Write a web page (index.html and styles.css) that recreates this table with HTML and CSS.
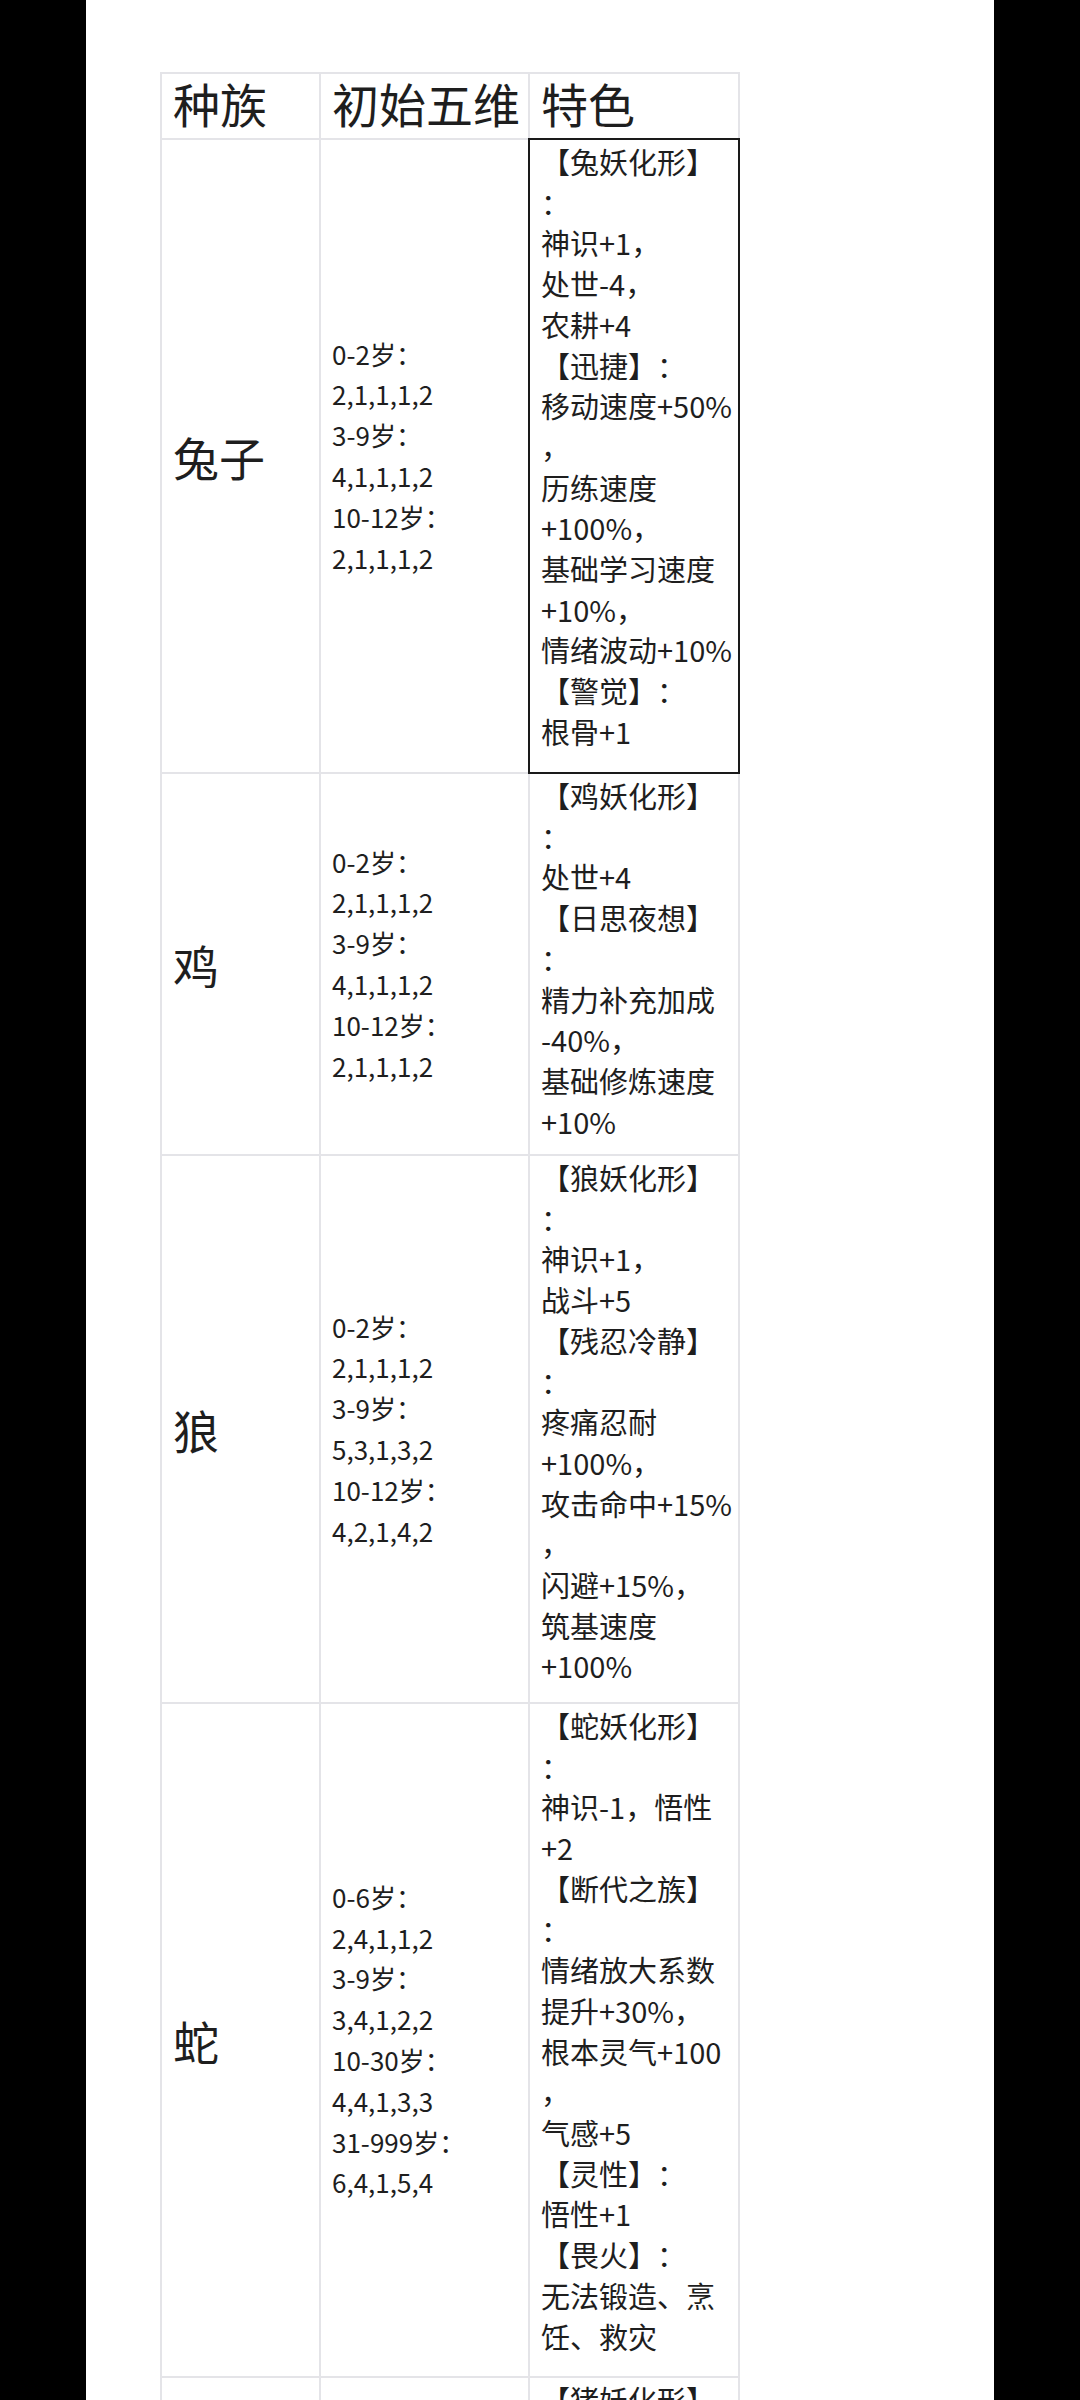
FILE: index.html
```html
<!DOCTYPE html>
<html lang="zh-CN">
<head>
    <meta charset="UTF-8">
    <meta name="viewport" content="width=device-width, initial-scale=1.0">
    <title>种族</title>
    <link rel="stylesheet" href="styles.css">
</head>
<body>
    <div class="page">
        <table class="sheet">
            <colgroup>
                <col class="c-race">
                <col class="c-stats">
                <col class="c-trait">
            </colgroup>
            <tr class="head">
                <th>种族</th>
                <th>初始五维</th>
                <th>特色</th>
            </tr>
            <tr class="r-rabbit">
                <td class="race">兔子</td>
                <td class="stats">0-2岁：<br>2,1,1,1,2<br>3-9岁：<br>4,1,1,1,2<br>10-12岁：<br>2,1,1,1,2</td>
                <td class="trait selected">【兔妖化形】<br>：<br>神识+1，<br>处世-4，<br>农耕+4<br>【迅捷】：<br>移动速度+50%<br>，<br>历练速度<br>+100%，<br>基础学习速度<br>+10%，<br>情绪波动+10%<br>【警觉】：<br>根骨+1</td>
            </tr>
            <tr class="r-chicken">
                <td class="race">鸡</td>
                <td class="stats">0-2岁：<br>2,1,1,1,2<br>3-9岁：<br>4,1,1,1,2<br>10-12岁：<br>2,1,1,1,2</td>
                <td class="trait">【鸡妖化形】<br>：<br>处世+4<br>【日思夜想】<br>：<br>精力补充加成<br>-40%，<br>基础修炼速度<br>+10%</td>
            </tr>
            <tr class="r-wolf">
                <td class="race">狼</td>
                <td class="stats">0-2岁：<br>2,1,1,1,2<br>3-9岁：<br>5,3,1,3,2<br>10-12岁：<br>4,2,1,4,2</td>
                <td class="trait">【狼妖化形】<br>：<br>神识+1，<br>战斗+5<br>【残忍冷静】<br>：<br>疼痛忍耐<br>+100%，<br>攻击命中+15%<br>，<br>闪避+15%，<br>筑基速度<br>+100%</td>
            </tr>
            <tr class="r-snake">
                <td class="race">蛇</td>
                <td class="stats">0-6岁：<br>2,4,1,1,2<br>3-9岁：<br>3,4,1,2,2<br>10-30岁：<br>4,4,1,3,3<br>31-999岁：<br>6,4,1,5,4</td>
                <td class="trait">【蛇妖化形】<br>：<br>神识-1，悟性<br>+2<br>【断代之族】<br>：<br>情绪放大系数<br>提升+30%，<br>根本灵气+100<br>，<br>气感+5<br>【灵性】：<br>悟性+1<br>【畏火】：<br>无法锻造、烹<br>饪、救灾</td>
            </tr>
            <tr class="r-pig">
                <td class="race">猪</td>
                <td class="stats"></td>
                <td class="trait">【猪妖化形】<br>：</td>
            </tr>
        </table>
    </div>
</body>
</html>
```

FILE: styles.css
```css
* {
    margin: 0;
    padding: 0;
    box-sizing: border-box;
}
html, body {
    background: #000;
}
body {
    font-family: "Liberation Sans", "Noto Sans CJK SC", sans-serif;
    color: #1e1e1e;
    overflow: hidden;
    text-spacing-trim: space-all;
}
.page {
    width: 908px;
    min-height: 100vh;
    margin: 0 auto;
    background: #fff;
    padding: 72px 0 0 74px;
}
.sheet {
    border-collapse: collapse;
    table-layout: fixed;
    width: 578px;
}
.c-race {
    width: 159px;
}
.c-stats {
    width: 209px;
}
.c-trait {
    width: 210px;
}
.sheet th,
.sheet td {
    border: 2px solid #e4e4e8;
    padding: 0 0 0 11px;
    text-align: left;
    white-space: nowrap;
    overflow: visible;
}
.sheet th {
    font-size: 47px;
    font-weight: normal;
    vertical-align: middle;
    line-height: 1;
}
.head {
    height: 66px;
}
.r-rabbit {
    height: 634px;
}
.r-chicken {
    height: 382px;
}
.r-wolf {
    height: 548px;
}
.r-snake {
    height: 674px;
}
.r-pig {
    height: 500px;
}
.race {
    font-size: 46px;
    vertical-align: middle;
}
.stats,
.trait {
    font-family: "Noto Sans CJK SC", sans-serif;
}
.stats {
    font-size: 26px;
    line-height: 40.8px;
    vertical-align: middle;
}
.trait {
    font-size: 29px;
    line-height: 40.7px;
    vertical-align: top;
    padding-top: 1px !important;
}
.selected {
    outline: 2px solid #1a1a1a;
    outline-offset: -1px;
}
```
